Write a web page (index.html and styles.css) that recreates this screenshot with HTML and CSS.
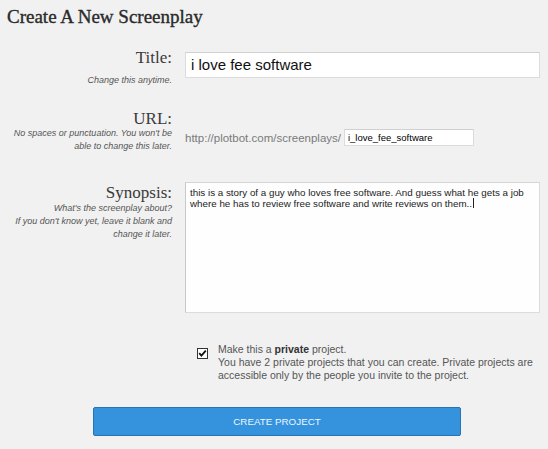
FILE: index.html
```html
<!DOCTYPE html>
<html>
<head>
<meta charset="utf-8">
<link rel="stylesheet" href="styles.css">
</head>
<body>
<h1 class="page-title">Create A New Screenplay</h1>
<div class="form">
  <div class="row row-title">
    <div class="label-col">
      <div class="label">Title:</div>
      <div class="hint hint-title">Change this anytime.</div>
    </div>
    <div class="field-col">
      <div class="text-input title-input">i love fee software</div>
    </div>
  </div>

  <div class="row row-url">
    <div class="label-col">
      <div class="label">URL:</div>
      <div class="hint">No spaces or punctuation. You won't be<br>able to change this later.</div>
    </div>
    <div class="field-col url-field">
      <span class="url-prefix">http://plotbot.com/screenplays/</span>
      <div class="text-input slug-input">i_love_fee_software</div>
    </div>
  </div>

  <div class="row row-synopsis">
    <div class="label-col">
      <div class="label label-synopsis">Synopsis:</div>
      <div class="hint hint-synopsis">What's the screenplay about?<br>If you don't know yet, leave it blank and<br>change it later.</div>
    </div>
    <div class="field-col">
      <div class="textarea">this is a story of a guy who loves free software. And guess what he gets a job where he has to review free software and write reviews on them..<span class="caret"></span></div>
    </div>
  </div>

  <div class="private-row">
    <span class="checkbox">
      <svg width="9" height="9" viewBox="0 0 9 9"><path d="M1.2 4.2 L3.4 6.6 L7.8 1.6" fill="none" stroke="#111" stroke-width="1.8"/></svg>
    </span>
    <div class="private-text">Make this a <b>private</b> project.<br>You have 2 private projects that you can create. Private projects are<br>accessible only by the people you invite to the project.</div>
  </div>

  <div class="button-row">
    <div class="btn-create">CREATE PROJECT</div>
  </div>
</div>
</body>
</html>
```

FILE: styles.css
```css
html, body {
  margin: 0;
  background: #f1f1f1;
}
body {
  padding: 0 7px;
  font-family: "Liberation Sans", Arial, sans-serif;
  color: #333;
}
.page-title {
  margin: 0 0 20px;
  padding-top: 5px;
  font-family: "Liberation Serif", "Times New Roman", serif;
  font-weight: normal;
  font-size: 19px;
  line-height: 24px;
  color: #2a2a2a;
  -webkit-text-stroke: 0.35px #2a2a2a;
}
.row {
  display: grid;
  grid-template-columns: 165px 355px;
  column-gap: 13px;
  align-items: start;
}
.label-col {
  text-align: right;
}
.label {
  font-family: "Liberation Serif", "Times New Roman", serif;
  font-size: 17px;
  line-height: 17px;
  color: #3a3a3a;
}
.hint {
  font-style: italic;
  font-size: 9px;
  line-height: 13px;
  color: #555;
}
.hint-title {
  margin-top: 8px;
}
.text-input {
  box-sizing: border-box;
  background: #fff;
  border: 1px solid #dcdcdc;
  border-top-color: #d0d0d0;
  color: #111;
  white-space: nowrap;
}
.title-input {
  margin-top: 3px;
  height: 26px;
  padding: 0 5px;
  font-size: 15px;
  line-height: 24px;
}
.row-url {
  margin-top: 23px;
}
.url-field {
  display: flex;
  align-items: center;
  gap: 3px;
  padding-top: 19px;
}
.url-prefix {
  font-size: 11.5px;
  color: #7a7a7a;
  white-space: nowrap;
}
.slug-input {
  width: 130px;
  height: 17px;
  padding: 0 3px;
  font-size: 9.5px;
  line-height: 15px;
  color: #000;
}
.row-synopsis {
  margin-top: 29px;
}
.label-synopsis {
  margin-top: 1px;
  line-height: 19px;
}
.textarea {
  box-sizing: border-box;
  height: 131px;
  padding: 4px 4px;
  background: #fefefe;
  border: 1px solid #dcdcdc;
  border-left-color: #c8c8c8;
  border-top-color: #d4d4d4;
  font-size: 9.8px;
  line-height: 11px;
  color: #222;
}
.caret {
  display: inline-block;
  width: 1px;
  height: 10px;
  margin-left: 1px;
  background: #222;
  vertical-align: -1px;
}
.private-row {
  display: flex;
  align-items: flex-start;
  gap: 10px;
  margin-top: 30px;
  padding-left: 190px;
}
.checkbox {
  box-sizing: border-box;
  flex: none;
  display: flex;
  align-items: center;
  justify-content: center;
  width: 11px;
  height: 11px;
  margin-top: 5px;
  background: #fff;
  border: 1px solid #333;
}
.private-text {
  font-size: 10.5px;
  line-height: 13px;
  color: #555;
}
.private-text b {
  color: #333;
}
.button-row {
  margin-top: 25px;
  padding-left: 86px;
}
.btn-create {
  box-sizing: border-box;
  width: 368px;
  height: 29px;
  background: #3592dd;
  border: 1px solid #2a73b2;
  border-radius: 2px;
  color: #eef6ff;
  font-size: 9.8px;
  line-height: 27px;
  text-align: center;
}
```
